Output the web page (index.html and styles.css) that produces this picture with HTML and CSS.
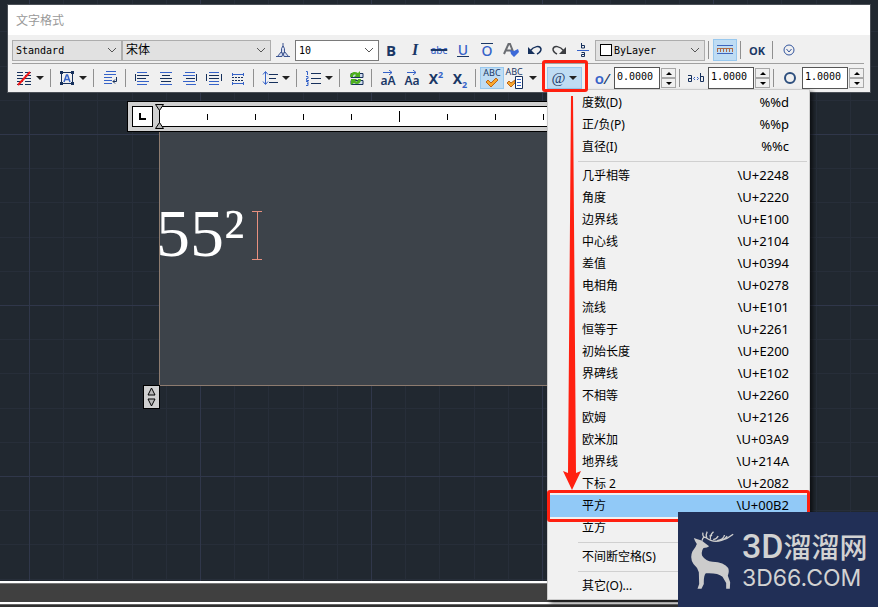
FILE: index.html
```html
<!DOCTYPE html>
<html lang="zh-CN">
<head>
<meta charset="utf-8">
<title>文字格式</title>
<link rel="stylesheet" href="styles.css">
</head>
<body>
<header class="window">
  <h1 class="title">文字格式</h1>
  <div class="tools">
    <div class="row">
      <select class="pick style-pick" aria-label="样式"><option>Standard</option></select>
      <select class="pick font-pick" aria-label="字体"><option>宋体</option></select>
      <button class="tool" aria-label="注释性"><svg width="14" height="16" viewBox="0 0 14 16" fill="#d5dcf0" stroke="#3d5590"><path d="M7 1v4M5.500 6.500 7 4l1.500 2.500V11h-3zM5.500 9.500 1.500 14.500H6L7 11l1 3.500h4.500L8.500 9.500M0 14.500h5M9 14.500h5"/></svg></button>
      <select class="pick size-pick" aria-label="文字高度"><option>10</option></select>
      <button class="tool bold" aria-label="粗体">B</button>
      <button class="tool italic" aria-label="斜体">I</button>
      <button class="tool strike" aria-label="删除线">abc</button>
      <button class="tool under" aria-label="下划线"><span>U</span></button>
      <button class="tool over" aria-label="上划线"><span>O</span></button>
      <button class="tool" aria-label="匹配格式"><svg width="16" height="16" viewBox="0 0 16 16"><path d="M1 12 5.500 2h1.500L11 12M3 8.500h6" fill="none" stroke="#6a6d72" stroke-width="2"/><path d="m7 8 4 1 4-2 1 3-5 5-3-3z" fill="#3c69d8"/></svg></button>
      <button class="tool" aria-label="放弃"><svg width="16" height="14" viewBox="0 0 16 14"><path d="M3 8C7 3 13 2 14 6c0 3-2 4-4 5" fill="none" stroke="#16305c" stroke-width="1.500"/><path d="M1 4v7h7z" fill="#16305c"/></svg></button>
      <button class="tool" aria-label="重做"><svg width="16" height="14" viewBox="0 0 16 14"><path d="M13 8C9 3 3 2 2 6c0 3 2 4 4 5" fill="none" stroke="#3c3e42" stroke-width="1.500"/><path d="M15 4v7H8z" fill="#3c3e42"/></svg></button>
      <button class="tool" aria-label="堆叠"><svg width="14" height="16" viewBox="0 0 14 16" fill="none" stroke="#3562c8"><path d="M1 8.500h12"/><path d="M5.500 1v5h3V3.500h-3M5.500 10.500h3v4h-3v-2h3" stroke="#16305c"/></svg></button>
      <span class="color-box"><select class="pick color-pick" aria-label="颜色"><option>ByLayer</option></select><i class="swatch"></i></span>
      <i class="sep"></i>
      <button class="tool on" aria-label="标尺"><svg width="18" height="10" viewBox="0 0 18 10"><path d="M1 .5h16M1 8.500h16" stroke="#3d64bd"/><path d="M1.500 7V3M4.500 7V3M7.500 7V3M10.500 7V3M13.500 7V3M16.500 7V3M1 3.500h16" stroke="#b06a44"/></svg></button>
      <i class="sep"></i>
      <button class="tool ok">OK</button>
      <i class="sep"></i>
      <button class="tool" aria-label="选项"><svg width="12" height="12" viewBox="0 0 12 12" fill="none" stroke="#33559e"><circle cx="6" cy="6" r="5"/><path d="m3.500 5 2.500 3 2.500-3"/></svg></button>
    </div>
    <div class="row second">
      <button class="tool wide" aria-label="栏数"><svg width="16" height="16" viewBox="0 0 16 16"><path d="M1 2.500h6M9 2.500h6M1 5.500h6M9 5.500h6M1 8.500h6M9 8.500h6M1 11.500h6M9 11.500h6M1 14.500h6M9 14.500h6" stroke="#16305c"/><path d="m2 15 12-13" stroke="#f01818" stroke-width="2"/></svg><i class="drop"></i></button>
      <i class="sep"></i>
      <button class="tool wide" aria-label="多行文字对正"><svg width="16" height="16" viewBox="0 0 16 16" fill="none"><path d="M2.500 1v14M13.500 1v14M1 2.500h14M1 13.500h14" stroke="#16305c"/><path d="M1 1h3v3H1zM12 1h3v3h-3zM1 12h3v3H1zM12 12h3v3h-3z" fill="#16305c"/><path d="M5 12 7.500 5h1L11 12M6 9.500h4" stroke="#3562c8" stroke-width="1.500"/></svg><i class="drop"></i></button>
      <i class="sep"></i>
      <button class="tool" aria-label="段落"><svg width="16" height="16" viewBox="0 0 16 16" fill="none"><path d="M4 1.500h10M2 4.500h12M2 7.500h8M2 10.500h8M2 13.500h8" stroke="#3562c8"/><path d="M14.500 7v4.500H11m2-2-2 2 2 2" stroke="#16305c"/></svg></button>
      <i class="sep"></i>
      <button class="tool" aria-label="左对齐"><svg width="16" height="16" viewBox="0 0 16 16"><path d="M3 2.500h10M3 5.500h12M3 8.500h9M3 11.500h12M3 14.500h10" stroke="#3562c8"/><path d="M1.500 4v7M3 5.500h12M3 8.500h9" stroke="#16305c"/></svg></button>
      <button class="tool" aria-label="居中"><svg width="16" height="16" viewBox="0 0 16 16"><path d="M2 2.500h12M4 11.500h8M2 14.500h12" stroke="#3562c8"/><path d="M4 5.500h8M2 8.500h12M3 11.500h10" stroke="#16305c"/></svg></button>
      <button class="tool" aria-label="右对齐"><svg width="16" height="16" viewBox="0 0 16 16"><path d="M3 2.500h10M1 5.500h12M4 8.500h9M1 11.500h12M4 14.500h10" stroke="#3562c8"/><path d="M14.500 4v7M4 8.500h9" stroke="#16305c"/></svg></button>
      <button class="tool" aria-label="对正"><svg width="16" height="16" viewBox="0 0 16 16"><path d="M3 2.500h10M3 5.500h10M3 8.500h10M3 11.500h10M3 14.500h10" stroke="#3562c8"/><path d="M.5 4v7M15.500 4v7M3 5.500h10M3 8.500h10" stroke="#16305c"/></svg></button>
      <button class="tool" aria-label="分布"><svg width="16" height="16" viewBox="0 0 16 16"><path d="M2 4.500h12M2 13.500h12M2.500 3v3M13.500 3v3M2.500 12v3M13.500 12v3" stroke="#3562c8"/><path d="M2 7.500h12M2 10.500h12" stroke="#16305c" stroke-dasharray="2 1"/></svg></button>
      <i class="sep"></i>
      <button class="tool wide" aria-label="行距"><svg width="16" height="16" viewBox="0 0 16 16"><path d="M3.500 2v12M1 4.500l2.500-3L6 4.500M1 11.500l2.500 3 2.500-3" fill="none" stroke="#3562c8"/><path d="M7 4.500h9M7 8.500h7M7 12.500h9" stroke="#16305c"/></svg><i class="drop"></i></button>
      <i class="sep"></i>
      <button class="tool wide" aria-label="编号"><svg width="16" height="16" viewBox="0 0 16 16" fill="none"><path d="M1 1.500h1.500V5M1 6.500h2v2H1.500v2H4M1 11.500h2v4H1M2 13.500h1" stroke="#3562c8"/><path d="M6 3.500h10M6 8.500h10M6 13.500h10" stroke="#16305c"/></svg><i class="drop"></i></button>
      <i class="sep"></i>
      <button class="tool" aria-label="插入字段"><svg width="16" height="16" viewBox="0 0 16 16"><path d="M3 3.500h12v4H3zM3 10.500h12v4H3z" fill="#cfd9ee" stroke="#16305c"/><path d="M2 7c0-5 5-6 8-4l2-2v6H6l2-2c-2-1-3 0-3 2zM13 9c0 5-4 6-7 4l-3 2V9h6L7 11c2 1 3 0 3-2z" fill="#4caf1e"/></svg></button>
      <i class="sep"></i>
      <button class="tool case" aria-label="大写"><span>aA</span><svg width="12" height="5" viewBox="0 0 12 5"><path d="M1 2.500h9M7 0l3 2.500L7 5" fill="none" stroke="#3562c8"/></svg></button>
      <button class="tool case" aria-label="小写"><span>Aa</span><svg width="12" height="5" viewBox="0 0 12 5"><path d="M1 2.500h9M7 0l3 2.500L7 5" fill="none" stroke="#3562c8"/></svg></button>
      <button class="tool script" aria-label="上标"><span>X<sup>2</sup></span></button>
      <button class="tool script" aria-label="下标"><span>X<sub>2</sub></span></button>
      <i class="sep"></i>
      <button class="tool on spell" aria-label="拼写检查"><span>ABC</span><svg width="14" height="11" viewBox="0 0 14 11"><path d="m1 5 2-2 3 3 5-5 2 2-7 7z" fill="#f9a82e" stroke="#bc661c"/></svg></button>
      <button class="tool wide spell dict" aria-label="编辑词典"><span>ABC</span><svg width="18" height="13" viewBox="0 0 18 13"><path d="m1 7 2-2 2 2 4-3v3l-4 4z" fill="#f9a82e" stroke="#bc661c"/><path d="M9.500.5h7v12h-7z" fill="#fff" stroke="#16305c"/><path d="M11 3.500h4M11 6.500h4M11 9.500h4" stroke="#3562c8"/></svg><i class="drop"></i></button>
      <i class="sep"></i>
      <div class="symbol">
        <button class="tool wide on at" aria-label="符号"><span>@</span><i class="drop"></i></button>
        <ul class="menu">
          <li><span>度数(D)</span><b>%%d</b></li>
          <li><span>正/负(P)</span><b>%%p</b></li>
          <li><span>直径(I)</span><b>%%c</b></li>
          <li class="rule"></li>
          <li><span>几乎相等</span><b>\U+2248</b></li>
          <li><span>角度</span><b>\U+2220</b></li>
          <li><span>边界线</span><b>\U+E100</b></li>
          <li><span>中心线</span><b>\U+2104</b></li>
          <li><span>差值</span><b>\U+0394</b></li>
          <li><span>电相角</span><b>\U+0278</b></li>
          <li><span>流线</span><b>\U+E101</b></li>
          <li><span>恒等于</span><b>\U+2261</b></li>
          <li><span>初始长度</span><b>\U+E200</b></li>
          <li><span>界碑线</span><b>\U+E102</b></li>
          <li><span>不相等</span><b>\U+2260</b></li>
          <li><span>欧姆</span><b>\U+2126</b></li>
          <li><span>欧米加</span><b>\U+03A9</b></li>
          <li><span>地界线</span><b>\U+214A</b></li>
          <li><span>下标 2</span><b>\U+2082</b></li>
          <li class="chosen"><span>平方</span><b>\U+00B2</b></li>
          <li><span>立方</span></li>
          <li class="rule"></li>
          <li><span>不间断空格(S)</span></li>
          <li class="rule"></li>
          <li><span>其它(O)...</span></li>
        </ul>
        <i class="callout"></i>
        <svg class="arrow" width="18" height="394" viewBox="0 0 18 394"><path d="M8 0h2l3 377 5-2-9 19-9-19 5 2z" fill="#ff2010"/></svg>
      </div>
      <i class="sep"></i>
      <label class="tool slant" for="oblique" aria-label="倾斜角度"><b>o</b>/</label>
      <input class="num" id="oblique" value="0.0000">
      <span class="spin"><button aria-label="增加角度"><i class="up"></i></button><button aria-label="减少角度"><i class="down"></i></button></span>
      <i class="sep"></i>
      <label class="tool" for="tracking" aria-label="追踪"><svg width="18" height="10" viewBox="0 0 18 10" fill="none" stroke="#16305c"><path d="M1 2.500h3.500v6h-3v-3h3M13.500 0v8.500h3v-5h-3"/><path d="m8 4-1.500 1.500L8 7m2-3 1.500 1.500L10 7" stroke="#3562c8"/></svg></label>
      <input class="num" id="tracking" value="1.0000">
      <span class="spin"><button aria-label="增加追踪"><i class="up"></i></button><button aria-label="减少追踪"><i class="down"></i></button></span>
      <i class="sep"></i>
      <label class="tool" for="width" aria-label="宽度因子"><svg width="14" height="14" viewBox="0 0 14 14"><circle cx="7" cy="7" r="5" fill="none" stroke="#2d4f7e" stroke-width="2"/></svg></label>
      <input class="num" id="width" value="1.0000">
      <span class="spin"><button aria-label="增加宽度"><i class="up"></i></button><button aria-label="减少宽度"><i class="down"></i></button></span>
    </div>
  </div>
</header>
<main class="canvas">
  <div class="ruler">
    <button class="tab" aria-label="制表符"><svg width="7" height="7" viewBox="0 0 7 7"><path d="M1 0v6h6" fill="none" stroke="#000" stroke-width="2"/></svg></button>
    <div class="track">
      <i></i><i></i><i></i><i></i><i class="major"></i><i></i><i></i><i></i><i></i><i class="major"></i>
      <svg class="indent" width="9" height="25" viewBox="0 0 9 25" fill="#b8b8b8" stroke="#000"><path d="M.5.500h8l-4 6zM.5 24.500h8l-4-6z"/></svg>
    </div>
  </div>
  <div class="editor"><span class="typed">55²</span><svg width="10" height="50" viewBox="0 0 10 50"><path d="M0 1.500h10M5.500 1v48M0 49.500h10" stroke="#e8907f" fill="none"/></svg></div>
  <button class="height" aria-label="调整高度"><svg width="9" height="20" viewBox="0 0 9 20" fill="#b8b8b8" stroke="#000"><path d="m4.500 1 3.500 7H1zM1 12h7l-3.500 7z"/></svg></button>
</main>
<footer class="status"></footer>
<aside class="brand">
  <svg width="45" height="60" viewBox="448 238 134 180"><path d="M459 262l11 4q14 2 22 11l13 10q-5 5-17 5-8 10-4 23 11 17 31 18 35 1 47 19 4 10-1 23l7 20-1 19h-11v-17l-11-19q-15-12-50-10-7 7-6 32l-7 14h-12l5-14-1-35q-4-15-16-25-12-18-3-38 10-12 13-22-6-8-9-18z" fill="#ccc"/><path d="M484 270q2-14 12-9 20 16 46 8 18-4 35-18M490 262q-6-8-4-16M498 262q-4-10 1-19M509 266q-3-12 9-23M506 256l8-2M529 270q20-4 22-17M517 267q11-2 15-11M541 269q12-3 18-13" fill="none" stroke="#ccc" stroke-width="4"/></svg>
  <div class="words"><div class="name"><span>3D</span>溜溜网</div><div class="site">3D66.COM</div></div>
</aside>
</body>
</html>
```
FILE: styles.css
```css
* { box-sizing: border-box; }

body {
  margin: 0;
  min-height: 100vh;
  display: flex;
  flex-direction: column;
  font: 12px "Noto Sans", "Noto Sans CJK SC", sans-serif;
  color: #000;
  background-color: #212830;
  background-image:
    linear-gradient(90deg, #30374a 1px, transparent 1px),
    linear-gradient(#30374a 1px, transparent 1px),
    linear-gradient(90deg, transparent 34px, #272e39 34px 35px, transparent 35px 68px, #272e39 68px 69px, transparent 69px 103px, #272e39 103px 104px, transparent 104px 137px, #272e39 137px 138px, transparent 138px),
    linear-gradient(transparent 34px, #272e39 34px 35px, transparent 35px 68px, #272e39 68px 69px, transparent 69px 103px, #272e39 103px 104px, transparent 104px 137px, #272e39 137px 138px, transparent 138px);
  background-size: 171px 171px;
  background-position: 29px 134px;
}

button, input, select { font: inherit; color: inherit; margin: 0; border-radius: 0; }
button { padding: 0; border: 0; background: none; }

.window {
  margin: 5px 8px 0;
  background: #f0f0f0;
  position: relative;
  z-index: 2;
  box-shadow: 0 0 0 1px #4a4f56;
}
.title {
  margin: 0;
  padding: 0 8px;
  height: 30px;
  line-height: 30px;
  font-size: 12px;
  font-weight: 400;
  font-family: "Noto Sans CJK SC", sans-serif;
  color: #999;
  background: #fff;
}
.tools { padding: 3px 6px 2px 4px; }
.row { display: flex; align-items: center; height: 24px; }
.second { margin: 1px 0 0; padding-top: 2px; height: 27px; border-top: 1px solid #a0a0a0; }

.pick {
  appearance: none;
  height: 21px;
  padding: 0 20px 0 3px;
  border: 1px solid #adadad;
  font: 10px "DejaVu Sans Mono", "Noto Sans CJK SC", monospace;
  background: #e1e1e1 url("data:image/svg+xml,%3Csvg xmlns='http://www.w3.org/2000/svg' width='10' height='6'%3E%3Cpath d='m1 1 4 4 4-4' fill='none' stroke='%23555'/%3E%3C/svg%3E") no-repeat right 4px center;
}
.style-pick { width: 110px; }
.font-pick { width: 149px; font-size: 12px; }
.size-pick { width: 84px; background-color: #fff; border-color: #7a7a7a; }
.color-box { display: grid; align-items: center; }
.color-box > * { grid-area: 1 / 1; }
.color-pick { width: 110px; padding-left: 18px; }
.swatch { width: 12px; height: 12px; margin-left: 5px; border: 1px solid #000; background: #fff; }

.tool {
  flex: none;
  width: 24px;
  height: 22px;
  display: flex;
  align-items: center;
  justify-content: center;
  color: #1a3766;
}
.wide { width: 35px; gap: 4px; }
.on { background: #bfdcf3; box-shadow: inset 0 0 0 1px #98c8ee; }
.sep { flex: none; width: 8px; height: 18px; border-left: 1px solid #909090; margin-left: 3px; margin-right: -3px; }
.drop { border: 4px solid transparent; border-top-color: #222; border-bottom: 0; }

.bold { font: 700 15px "Open Sans", sans-serif; }
.italic { font: italic 700 16px "Liberation Serif", serif; }
.strike { font: 10px "Noto Sans", sans-serif; color: #3562c8; text-decoration: line-through 2px #1a3766; }
.under, .over { font: 500 14px "Noto Sans", sans-serif; color: #3562c8; }
.under span, .over span { padding: 0 1px; line-height: 13px; }
.under span { border-bottom: 1px solid #1a3766; }
.over span { border-top: 1px solid #1a3766; }
.ok { font: 700 11px "Open Sans", sans-serif; }

.case { flex-direction: column-reverse; font: 600 12px "Noto Sans", sans-serif; }
.case span { line-height: 12px; }
.script { font: 700 14px "Noto Sans", sans-serif; }
.script sup, .script sub { font-size: 9px; line-height: 0; color: #3562c8; }
.spell { flex-direction: column; gap: 0; font: 9px "Noto Sans", sans-serif; }
.spell span { line-height: 9px; }
.dict { display: grid; grid-template-columns: 20px 12px; justify-items: start; align-content: center; }
.dict .drop { grid-area: 1 / 2 / 3 / 3; align-self: center; margin-left: 3px; }
.at { font: italic 15px "Liberation Serif", serif; }
.slant { font: italic 15px "Noto Sans", sans-serif; }
.slant b { font-style: normal; font-weight: 600; color: #3562c8; }

.num {
  width: 46px;
  height: 22px;
  padding: 0 2px 4px;
  border: 1px solid #555;
  font: 10px "DejaVu Sans Mono", monospace;
  background: #fff;
}
.spin { display: flex; flex-direction: column; width: 15px; height: 20px; margin-left: 1px; }
.spin button { flex: 1; display: flex; align-items: center; justify-content: center; border: 1px solid #a8a8a8; }
.up, .down { border: 3px solid transparent; }
.up { border-bottom-color: #000; border-top: 0; }
.down { border-top-color: #000; border-bottom: 0; }

.symbol { position: relative; }
.menu {
  position: absolute;
  top: 100%;
  left: 0;
  width: 263px;
  margin: 0;
  padding: 2px;
  list-style: none;
  background: #f1f1f1;
  border: 1px solid #ccc;
  box-shadow: 3px 3px 4px rgba(0, 0, 0, .6);
}
.menu li {
  display: flex;
  justify-content: space-between;
  height: 22px;
  line-height: 22px;
  padding: 0 18px 0 32px;
}
.menu b { font-size: 13px; font-weight: 400; line-height: 20px; }
.menu .rule { height: 1px; margin: 3px 0 3px 28px; padding: 0; background: #d0d0d0; }
.menu .chosen { background: #91c9f7; position: relative; }
.chosen::after {
  content: "";
  position: absolute;
  inset: -5px -3px;
  border: 3px solid #ff2010;
  border-radius: 3px;
}
.callout {
  position: absolute;
  inset: -7px -6px -3px -5px;
  border: 3px solid #ff2010;
  border-radius: 3px;
}
.arrow { position: absolute; top: 29px; left: 16px; }

.canvas { flex: 1; padding: 9px 100px 0 127px; }
.ruler { display: flex; height: 31px; padding: 4px; border: 1px solid #000; background: #d0d0d0; }
.tab { width: 21px; height: 21px; border: 1px solid #000; background: #fff; display: grid; place-items: center; }
.track {
  flex: 1;
  display: flex;
  align-items: center;
  overflow: visible;
  position: relative;
  margin-left: 6px;
  border: 1px solid #000;
  background: #fff;
}
.track i { width: 1px; height: 6px; margin-left: 47px; background: #000; }
.track .major { height: 11px; }
.indent { position: absolute; left: -5px; top: -3px; }
.editor {
  margin-left: 32px;
  height: 254px;
  padding-top: 62px;
  display: flex;
  align-items: flex-start;
  background: #3d434a;
  border: solid #8d7b6f;
  border-width: 0 1px 1px;
}
.typed { font: 68px "Liberation Serif", serif; line-height: 78px; color: #fff; margin-left: -4px; }
.editor svg { margin: 16px 0 0 8px; }
.height { display: grid; place-items: center; width: 17px; height: 24px; margin: -1px 0 0 16px; border: 1px solid #000; background: #d0d0d0; }

.status {
  height: 26px;
  border-top: 2px solid #fff;
  background: linear-gradient(#777 1px, #404040 1px 19px, #fff 19px 21px, #666 21px 22px, #303030 22px);
}

.brand {
  position: fixed;
  right: 0;
  bottom: 0;
  z-index: 3;
  display: flex;
  align-items: center;
  gap: 7px;
  width: 200px;
  height: 95px;
  padding: 0 0 0 12px;
  background: #212f56;
  color: #d2d2d2;
}
.name { display: flex; align-items: center; font: 500 28px "Noto Sans CJK SC", sans-serif; line-height: 32px; }
.name span { font: 500 34px Roboto, sans-serif; line-height: 32px; }
.site { font: 23px Inter, sans-serif; line-height: 24px; padding-top: 4px; }
```
